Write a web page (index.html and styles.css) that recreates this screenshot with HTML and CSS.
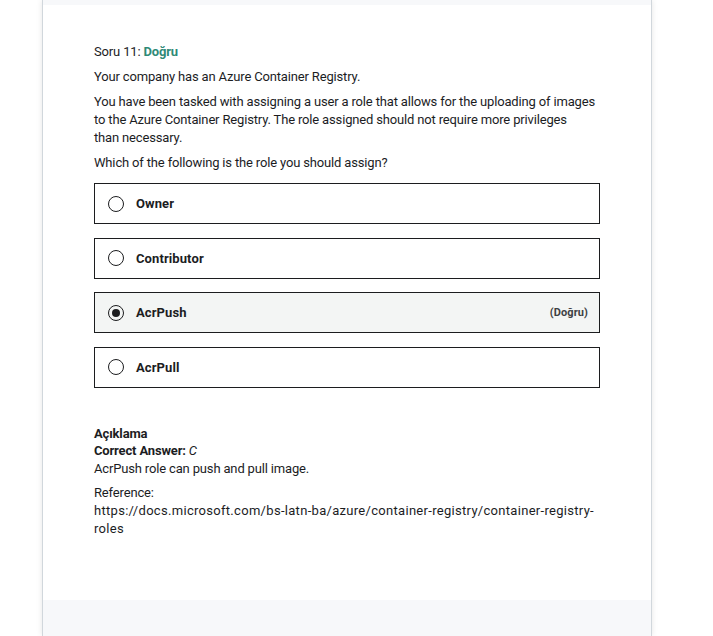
FILE: index.html
```html
<!DOCTYPE html>
<html lang="tr">
<head>
<meta charset="utf-8">
<title>Soru 11</title>
<link rel="stylesheet" href="styles.css">
</head>
<body>
<div class="page">
  <div class="card">
    <div class="strip"></div>
    <div class="content">
      <div class="question-title">Soru 11: <span class="ok">Doğru</span></div>
      <p class="text">Your company has an Azure Container Registry.</p>
      <p class="text">You have been tasked with assigning a user a role that allows for the uploading of images to the Azure Container Registry. The role assigned should not require more privileges<br>than necessary.</p>
      <p class="text">Which of the following is the role you should assign?</p>

      <ul class="options">
        <li class="option">
          <span class="radio"></span>
          <span class="label">Owner</span>
        </li>
        <li class="option">
          <span class="radio"></span>
          <span class="label">Contributor</span>
        </li>
        <li class="option selected">
          <span class="radio checked"></span>
          <span class="label">AcrPush</span>
          <span class="tag">(Doğru)</span>
        </li>
        <li class="option">
          <span class="radio"></span>
          <span class="label">AcrPull</span>
        </li>
      </ul>

      <div class="explanation">
        <div class="exp-title">Açıklama</div>
        <p class="text tight"><strong>Correct Answer:</strong> <em>C</em><br>AcrPush role can push and pull image.</p>
        <p class="text tight">Reference:<br><span class="url">https://docs.microsoft.com/bs-latn-ba/azure/container-registry/container-registry-roles</span></p>
      </div>
    </div>
    <div class="footer"></div>
  </div>
</div>
</body>
</html>
```

FILE: styles.css
```css
html, body {
  margin: 0;
  padding: 0;
  background: #ffffff;
}

body {
  font-family: Roboto, "Liberation Sans", Arial, sans-serif;
  font-size: 13px;
  color: #1c1d1f;
}

.page {
  padding-left: 42px;
  height: 636px;
  overflow: hidden;
}

.card {
  width: 610px;
  box-sizing: border-box;
  border-left: 1px solid #d1d7dc;
  border-right: 1px solid #d1d7dc;
  box-shadow: 0 0 6px rgba(0, 0, 0, 0.10);
  min-height: 636px;
  display: flex;
  flex-direction: column;
}

.strip {
  height: 5px;
  background: #f7f8fa;
}

.content {
  background: #ffffff;
  padding: 38px 51px 0 51px;
  height: 595px;
  box-sizing: border-box;
  letter-spacing: -0.16px;
}

.footer {
  flex: 1;
  background: #f7f8fa;
}

.question-title {
  line-height: 18px;
  margin: 0 0 7px;
}

.ok {
  color: #2f8a77;
  font-weight: bold;
}

.text {
  margin: 0 0 7px;
  line-height: 18px;
}

.options {
  list-style: none;
  margin: 11px 0 0;
  padding: 0;
  display: flex;
  flex-direction: column;
  gap: 13.5px;
  letter-spacing: 0.1px;
}

.option {
  height: 41px;
  box-sizing: border-box;
  border: 1px solid #1c1d1f;
  display: flex;
  align-items: center;
  padding: 0 11px 0 13px;
  gap: 12px;
  font-weight: bold;
}

.option.selected {
  background: #f3f5f4;
}

.radio {
  width: 16px;
  height: 16px;
  box-sizing: border-box;
  border: 1.5px solid #1c1d1f;
  border-radius: 50%;
  display: flex;
  align-items: center;
  justify-content: center;
  flex: none;
}

.radio.checked::after {
  content: "";
  width: 8px;
  height: 8px;
  border-radius: 50%;
  background: #1c1d1f;
}

.label {
  flex: 1;
}

.tag {
  font-size: 11px;
  color: #3e4143;
}

.explanation {
  margin-top: 38px;
}

.exp-title {
  font-weight: bold;
  line-height: 16px;
}

.text.tight {
  margin: 0 0 6px;
}

.text em {
  font-style: italic;
}

.url {
  letter-spacing: 0.3px;
}
```
